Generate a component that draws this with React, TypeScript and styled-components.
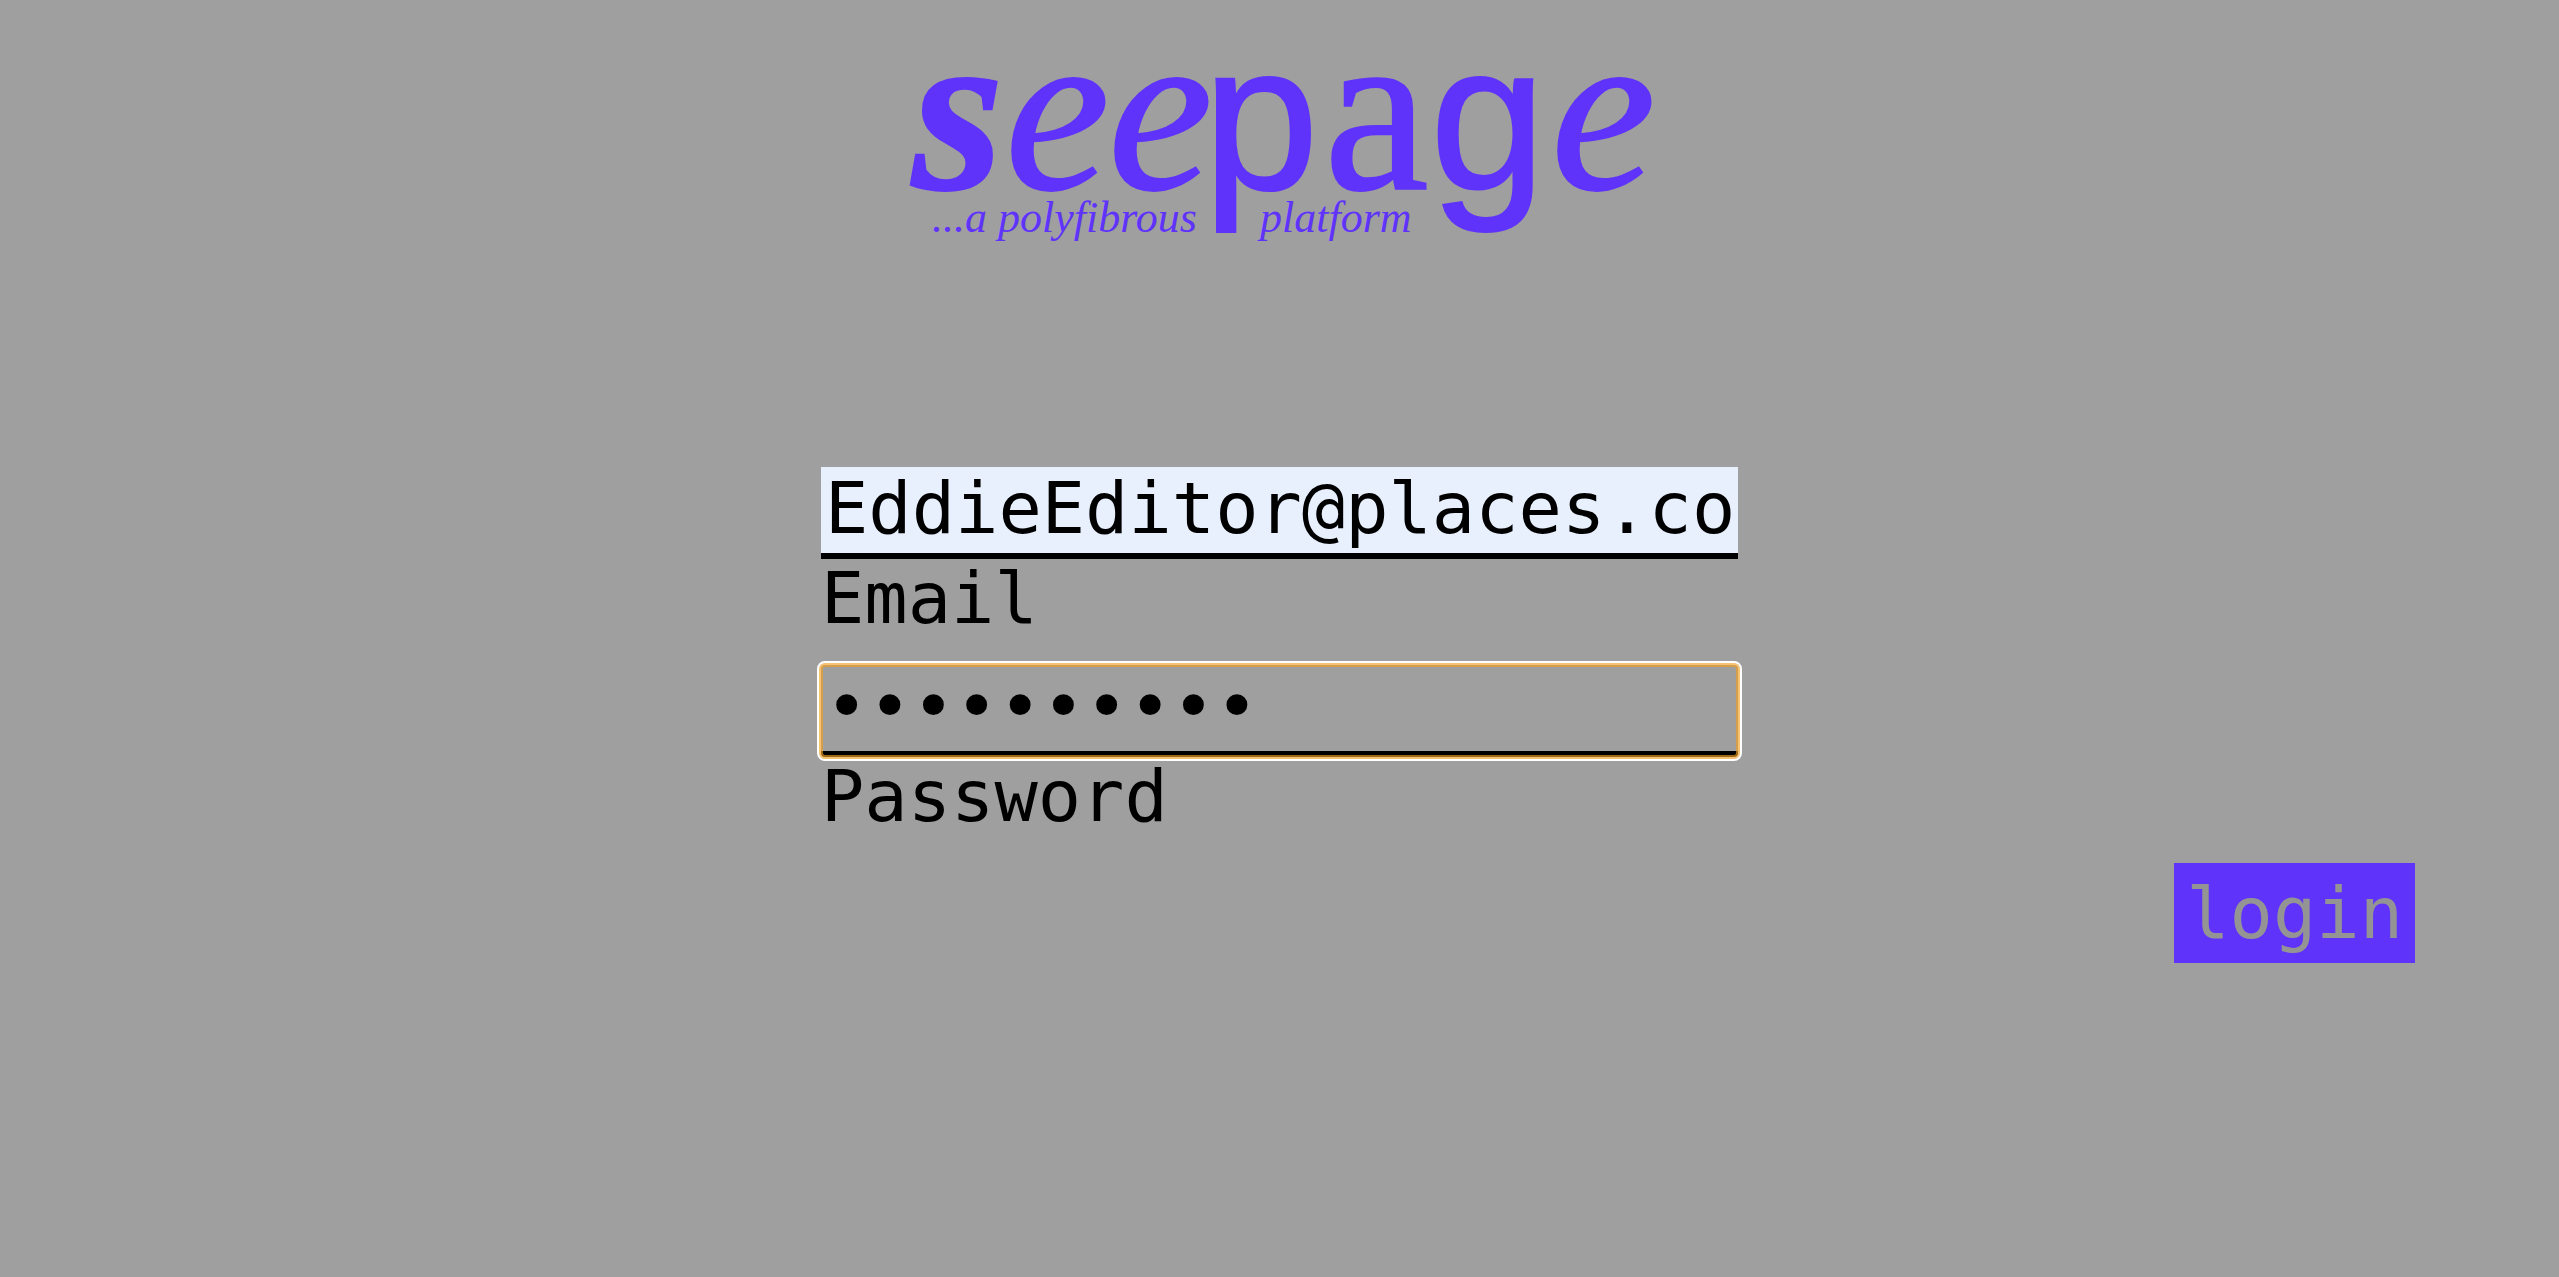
import React, { useState } from "react";
import styled, { createGlobalStyle, css } from "styled-components";

const violet = "#5f33fa";

const GlobalStyle = createGlobalStyle`
  *, *::before, *::after { box-sizing: border-box; }
  body {
    margin: 0;
    background: #9f9f9f;
    color: #000;
    font-family: "DejaVu Sans Mono", "Liberation Mono", monospace;
    font-size: 72px;
  }
`;

const Page = styled.main`
  display: flex;
  flex-direction: column;
  gap: 207px;
  padding: 60px 144px;
`;

const Logo = styled.svg`
  display: block;
  align-self: center;
  width: 759px;
  max-width: 100%;
  overflow: visible;
  fill: ${violet};
`;

const Wordmark = styled.text`
  font-family: "Liberation Serif", serif;
  font-size: 236px;
  stroke: ${violet};
  stroke-width: 2px;
`;

const Letter = styled.tspan<{ $kind: "slanted" | "heavy" | "round" | "plain" }>`
  ${({ $kind }) => $kind === "slanted" && css`font-style: italic;`}
  ${({ $kind }) => $kind === "heavy" && css`font-style: italic; font-weight: 700;`}
  ${({ $kind }) => $kind === "round" && css`
    font-family: "Liberation Sans", sans-serif;
    font-size: 208px;
  `}
`;

const Tagline = styled.text`
  font-family: "Liberation Serif", serif;
  font-size: 44px;
  font-style: italic;
`;

const Form = styled.form`
  display: flex;
  flex-direction: column;
  align-items: center;
  gap: 28px;
`;

const Field = styled.div`
  display: flex;
  flex-direction: column;
  width: 917px;
  max-width: 100%;
`;

const Control = styled.div<{ $active?: boolean }>`
  position: relative;
  ${({ $active }) => $active && css`
    &::after {
      content: "";
      position: absolute;
      inset: -4px;
      border: 2px solid #fff;
      border-radius: 8px;
      box-shadow: inset 0 0 0 2px #f6c274, inset 0 0 0 4px rgba(240, 158, 34, 0.66);
      pointer-events: none;
    }
  `}
`;

const Input = styled.input<{ $filled?: boolean }>`
  display: block;
  width: 100%;
  height: 92px;
  padding: 0 4px 4px;
  border: 0;
  border-bottom: 6px solid #000;
  border-radius: 0;
  outline: none;
  background: ${({ $filled }) => ($filled ? "#e8f0fe" : "transparent")};
  color: #000;
  font: inherit;
`;

const Label = styled.label`
  line-height: 78px;
`;

const LoginButton = styled.button`
  align-self: flex-end;
  height: 100px;
  padding: 0 12px;
  border: 0;
  background: ${violet};
  color: #949494;
  font: inherit;
  line-height: 86px;
  cursor: pointer;
`;

export default function App() {
  const [email, setEmail] = useState("EddieEditor@places.co");
  const [password, setPassword] = useState("polyfibers");

  return (
    <>
      <GlobalStyle />
      <Page>
        <Logo viewBox="900 60 759 200" role="img" aria-label="seepage ...a polyfibrous platform">
          <Wordmark y="189">
            <Letter $kind="heavy" x="912">s</Letter>
            <Letter $kind="slanted" x="1005">e</Letter>
            <Letter $kind="slanted" x="1108">e</Letter>
            <Letter $kind="round" x="1203">p</Letter>
            <Letter $kind="plain" x="1324">a</Letter>
            <Letter $kind="round" x="1430">g</Letter>
            <Letter $kind="slanted" x="1551">e</Letter>
          </Wordmark>
          <Tagline y="232">
            <tspan x="932">...a polyfibrous</tspan>
            <tspan x="1260">platform</tspan>
          </Tagline>
        </Logo>
        <Form onSubmit={(event) => event.preventDefault()}>
          <Field>
            <Control>
              <Input
                id="email"
                type="text"
                $filled
                spellCheck={false}
                value={email}
                onChange={(event) => setEmail(event.target.value)}
              />
            </Control>
            <Label htmlFor="email">Email</Label>
          </Field>
          <Field>
            <Control $active>
              <Input
                id="password"
                type="password"
                value={password}
                onChange={(event) => setPassword(event.target.value)}
              />
            </Control>
            <Label htmlFor="password">Password</Label>
          </Field>
          <LoginButton type="submit">login</LoginButton>
        </Form>
      </Page>
    </>
  );
}
